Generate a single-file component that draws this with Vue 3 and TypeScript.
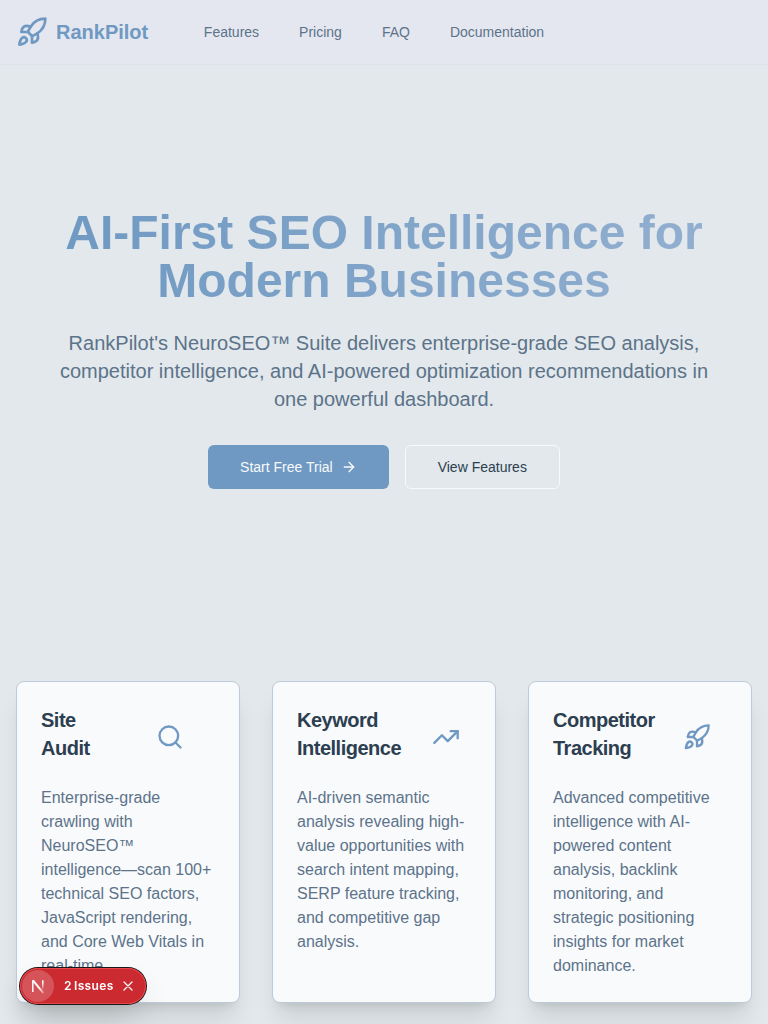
<script setup lang="ts">
interface Feature {
  title: [string, string]
  icon: string
  paths: string[]
  text: string
}

const rocket: string[] = [
  'M4.5 16.5c-1.5 1.26-2 5-2 5s3.74-.5 5-2c.71-.84.7-2.13-.09-2.91a2.18 2.18 0 0 0-2.91-.09z',
  'm12 15-3-3a22 22 0 0 1 2-3.95A12.88 12.88 0 0 1 22 2c0 2.72-.78 7.5-6 11a22.35 22.35 0 0 1-4 2z',
  'M9 12H4s.55-3.03 2-4c1.62-1.08 5 0 5 0',
  'M12 15v5s3.03-.55 4-2c1.08-1.62 0-5 0-5',
]

const links: string[] = ['Features', 'Pricing', 'FAQ', 'Documentation']

const features: Feature[] = [
  {
    title: ['Site', 'Audit'],
    icon: 'search',
    paths: ['M19 11a8 8 0 1 1-16 0a8 8 0 0 1 16 0z', 'm21 21-4.3-4.3'],
    text: 'Enterprise-grade crawling with NeuroSEO™ intelligence—scan 100+ technical SEO factors, JavaScript rendering, and Core Web Vitals in real-time.',
  },
  {
    title: ['Keyword', 'Intelligence'],
    icon: 'trend',
    paths: ['M16 7h6v6', 'm22 7-8.5 8.5-5-5L2 17'],
    text: 'AI-driven semantic analysis revealing high-value opportunities with search intent mapping, SERP feature tracking, and competitive gap analysis.',
  },
  {
    title: ['Competitor', 'Tracking'],
    icon: 'rocket',
    paths: rocket,
    text: 'Advanced competitive intelligence with AI-powered content analysis, backlink monitoring, and strategic positioning insights for market dominance.',
  },
]
</script>

<template>
  <div class="page">
    <header class="topbar">
      <a class="brand">
        <svg class="icon brand-icon" viewBox="0 0 24 24"><path v-for="d in rocket" :key="d" :d="d" /></svg>
        <span>RankPilot</span>
      </a>
      <nav class="nav">
        <a v-for="link in links" :key="link">{{ link }}</a>
      </nav>
    </header>

    <section class="hero">
      <h1>AI-First SEO Intelligence for<br />Modern Businesses</h1>
      <p>
        RankPilot's NeuroSEO™ Suite delivers enterprise-grade SEO analysis,<br />
        competitor intelligence, and AI-powered optimization recommendations in<br />
        one powerful dashboard.
      </p>
      <div class="actions">
        <button class="btn primary">
          Start Free Trial
          <svg class="icon arrow" viewBox="0 0 24 24"><path d="M5 12h14" /><path d="m12 5 7 7-7 7" /></svg>
        </button>
        <button class="btn outline">View Features</button>
      </div>
    </section>

    <section class="cards">
      <article v-for="f in features" :key="f.icon" class="card">
        <div class="card-head">
          <h3>{{ f.title[0] }}<br />{{ f.title[1] }}</h3>
          <svg class="icon card-icon" :class="f.icon" viewBox="0 0 24 24"><path v-for="d in f.paths" :key="d" :d="d" /></svg>
        </div>
        <p>{{ f.text }}</p>
      </article>
    </section>

    <div class="issues">
      <span class="mark">
        <svg viewBox="0 0 32 32">
          <defs>
            <linearGradient id="stem" x1="0" y1="10" x2="0" y2="20" gradientUnits="userSpaceOnUse">
              <stop offset="0.3" stop-color="#fff" />
              <stop offset="1" stop-color="#fff" stop-opacity="0" />
            </linearGradient>
            <linearGradient id="slash" x1="17" y1="16" x2="22.5" y2="23.5" gradientUnits="userSpaceOnUse">
              <stop offset="0.2" stop-color="#fff" />
              <stop offset="1" stop-color="#fff" stop-opacity="0.2" />
            </linearGradient>
          </defs>
          <path d="M11 10.4L21.4 23.2" stroke="url(#slash)" stroke-width="1.9" />
          <path d="M10.8 22V10.2" stroke="#fff" stroke-width="1.5" />
          <path d="M20.8 10.2V20" stroke="url(#stem)" stroke-width="1.5" />
        </svg>
      </span>
      <span class="count">2</span><span class="label">Issues</span>
      <svg class="close" viewBox="0 0 10 10"><path d="M1 1l8 8M9 1L1 9" /></svg>
    </div>
  </div>
</template>

<style>
body {
  margin: 0;
  overflow: hidden;
}
</style>

<style scoped>
.page {
  box-sizing: border-box;
  height: 1024px;
  overflow: hidden;
  background: #e2e8eb;
  color: #2c3e50;
  font-family: "Liberation Sans", Arial, sans-serif;
}
h1, h3, p {
  margin: 0;
}
.icon {
  display: block;
  flex: none;
  fill: none;
  stroke: #6f99c2;
  stroke-width: 2;
  stroke-linecap: round;
  stroke-linejoin: round;
}
.topbar {
  box-sizing: border-box;
  height: 65px;
  padding: 0 16px;
  display: flex;
  align-items: center;
  background: #e4e7ef;
  border-bottom: 1px solid #dce3e8;
}
.brand {
  display: flex;
  align-items: center;
  gap: 8px;
  color: #6f99c2;
  font-size: 20px;
  line-height: 28px;
  font-weight: 700;
}
.brand-icon {
  width: 32px;
  height: 32px;
}
.nav {
  display: flex;
  gap: 40px;
  margin-left: 55.6px;
  color: #5c738a;
  font-size: 14px;
  line-height: 20px;
}
.hero {
  box-sizing: border-box;
  height: 616px;
  padding-top: 144px;
  display: flex;
  flex-direction: column;
  align-items: center;
  text-align: center;
}
h1 {
  width: 672px;
  font-size: 48px;
  line-height: 48px;
  font-weight: 700;
  color: transparent;
  background: linear-gradient(to right, #6f99c2, #92afd0);
  background-clip: text;
  -webkit-background-clip: text;
}
.hero p {
  margin-top: 24px;
  color: #5c738a;
  font-size: 20px;
  line-height: 28px;
  white-space: nowrap;
}
.actions {
  display: flex;
  gap: 16px;
  margin-top: 32px;
}
.btn {
  box-sizing: border-box;
  height: 44px;
  padding: 0 32px;
  display: flex;
  align-items: center;
  gap: 8px;
  border: 0;
  border-radius: 6px;
  font: 14px/20px "Liberation Sans", Arial, sans-serif;
}
.primary {
  background: #6f99c2;
  color: #f8fafc;
}
.outline {
  border: 1px solid #f8fafc;
  background: transparent;
  color: #2c3e50;
}
.arrow {
  width: 16px;
  height: 16px;
  stroke: #f8fafc;
}
.cards {
  display: grid;
  grid-template-columns: repeat(3, 1fr);
  gap: 32px;
  padding: 0 16px;
}
.card {
  box-sizing: border-box;
  height: 322px;
  padding: 24px;
  border: 1px solid #bccada;
  border-radius: 8px;
  background: #f9fafc;
  box-shadow: 0 20px 25px -5px rgba(0, 0, 0, 0.1), 0 8px 10px -6px rgba(0, 0, 0, 0.1);
}
.card-head {
  display: flex;
  align-items: center;
  height: 56px;
  margin-bottom: 24px;
}
h3 {
  font-size: 20px;
  line-height: 28px;
  font-weight: 700;
  letter-spacing: -0.5px;
}
.card-icon {
  width: 28px;
  height: 28px;
  margin-top: 6px;
}
.search {
  margin-left: 66px;
}
.trend {
  margin-left: 31px;
}
.rocket {
  margin-left: 28px;
}
.card p {
  color: #5c738a;
  font-size: 16px;
  line-height: 24px;
}
.issues {
  position: fixed;
  left: 20px;
  bottom: 20px;
  box-sizing: border-box;
  width: 126px;
  height: 36px;
  padding-left: 2px;
  display: flex;
  align-items: center;
  border-radius: 18px;
  background: #ca2a30;
  color: #fff;
  font: 600 12px/16px Inter, sans-serif;
  letter-spacing: 0.35px;
  box-shadow: 0 0 0 1px #171717, inset 0 0 0 1px #e5484d, 0 16px 32px -8px rgba(0, 0, 0, 0.24);
}
.mark {
  flex: none;
  width: 32px;
  height: 32px;
  border-radius: 50%;
  background: rgba(255, 255, 255, 0.2);
}
.mark svg {
  display: block;
  width: 32px;
  height: 32px;
}
.count {
  width: 8px;
  margin-left: 10px;
}
.label {
  width: 39px;
  margin-left: 2px;
}
.close {
  flex: none;
  width: 10px;
  height: 10px;
  margin-left: 10px;
  fill: none;
  stroke: #fff;
  stroke-width: 1.2;
  stroke-linecap: round;
}
</style>
